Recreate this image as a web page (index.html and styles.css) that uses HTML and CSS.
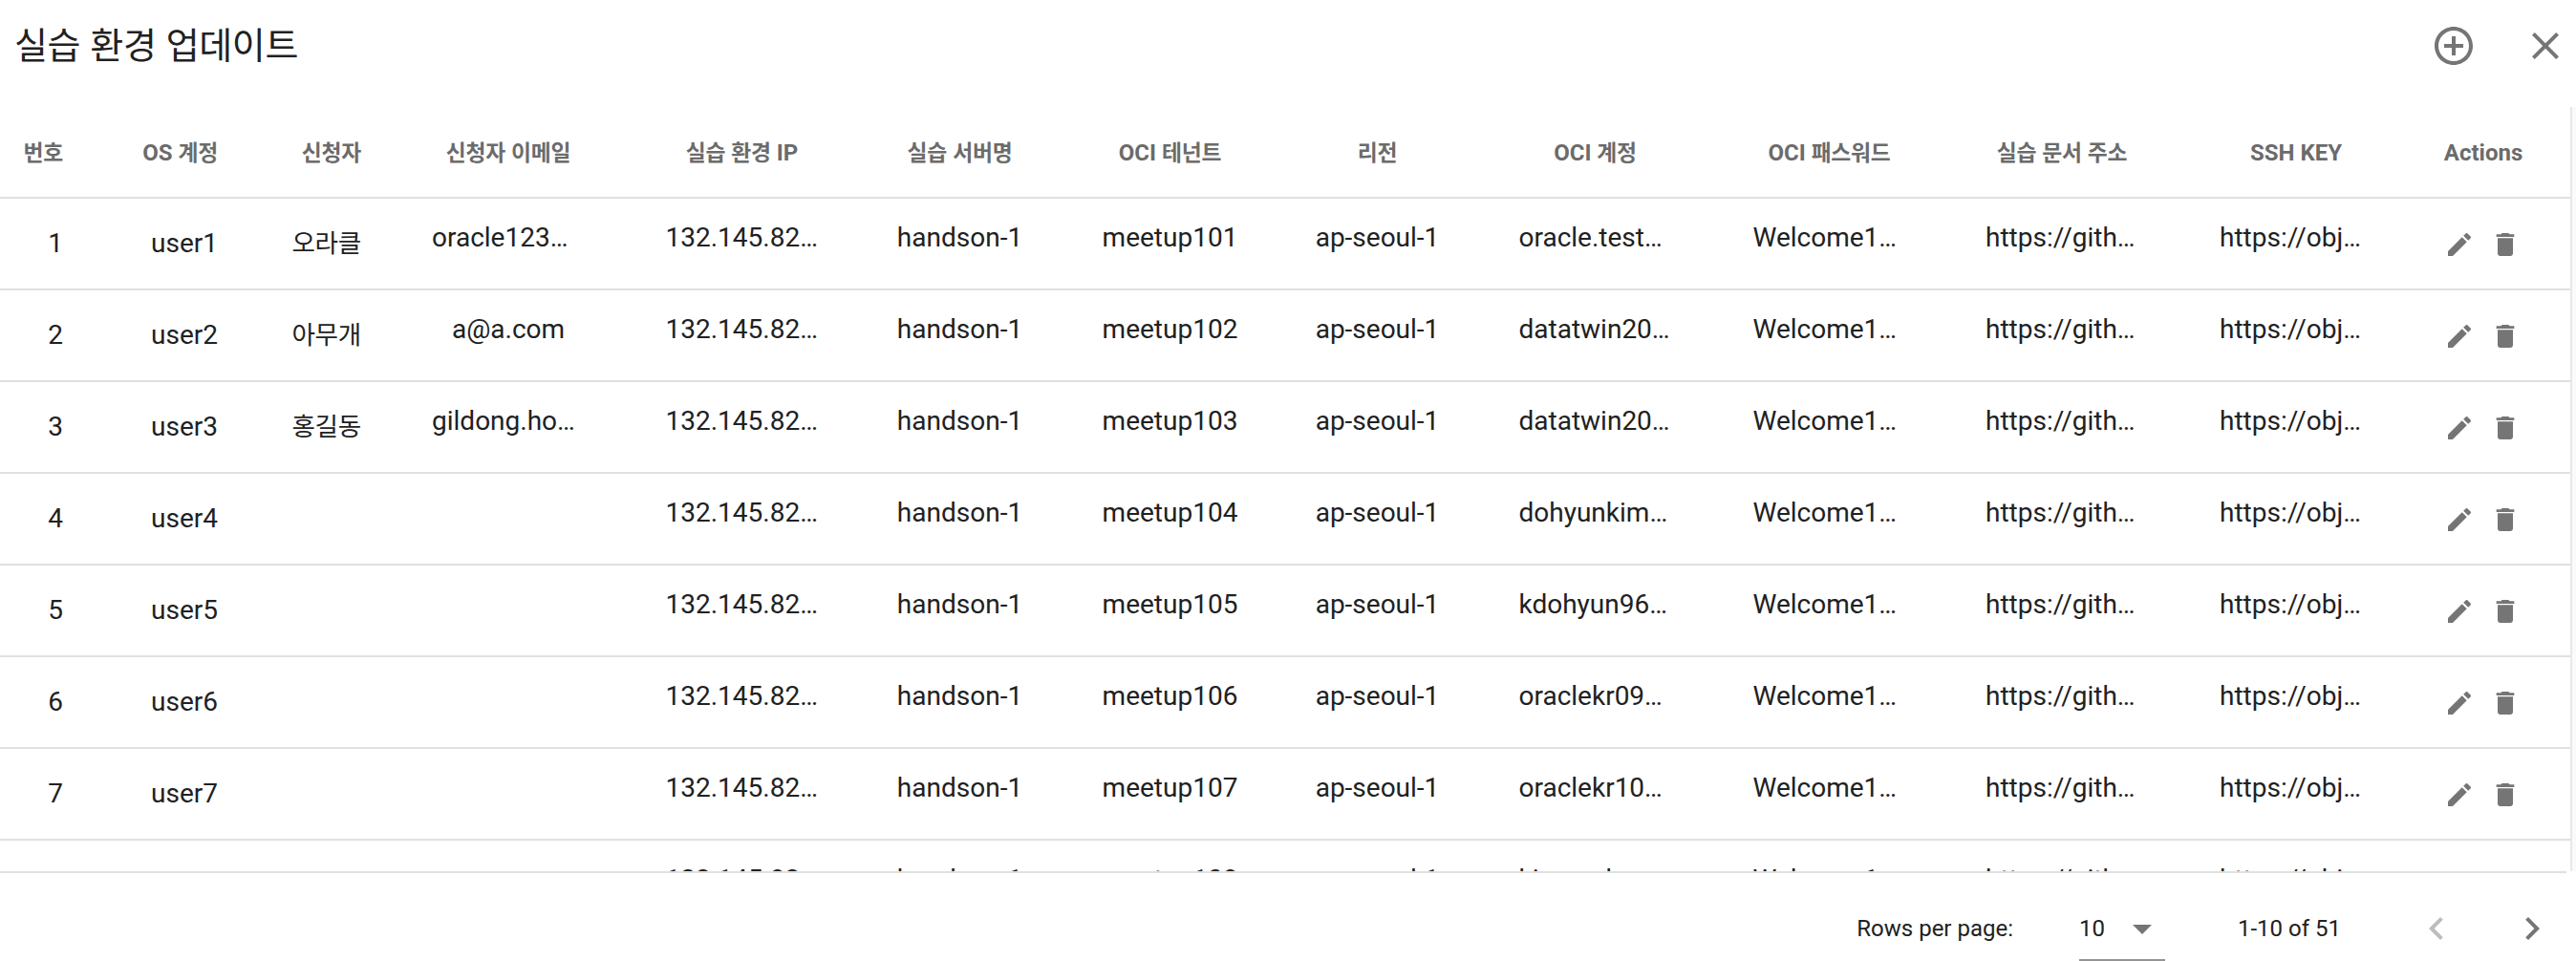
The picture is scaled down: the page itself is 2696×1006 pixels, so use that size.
FILE: index.html
```html
<!DOCTYPE html>
<html lang="ko">
<head>
<meta charset="utf-8">
<title>실습 환경 업데이트</title>
<link rel="stylesheet" href="styles.css">
</head>
<body>
<svg class="sprite" aria-hidden="true">
  <symbol id="edit" viewBox="0 0 24 24"><path d="M3 17.25V21h3.75L17.81 9.94l-3.75-3.75L3 17.25zM20.71 7.04c.39-.39.39-1.02 0-1.41l-2.34-2.34c-.39-.39-1.02-.39-1.41 0l-1.83 1.83 3.75 3.75 1.83-1.83z"/></symbol>
  <symbol id="delete" viewBox="0 0 24 24"><path d="M6 19c0 1.1.9 2 2 2h8c1.1 0 2-.9 2-2V7H6v12zM19 4h-3.500l-1-1h-5l-1 1H5v2h14V4z"/></symbol>
</svg>
<header class="toolbar">
  <h1 class="title"><span class="ko">실습 환경 업데이트</span></h1>
  <button class="icon-button" aria-label="추가"><svg class="icon-large" viewBox="0 0 24 24"><path d="M13 7h-2v4H7v2h4v4h2v-4h4v-2h-4V7zm-1-5C6.480 2 2 6.480 2 12s4.480 10 10 10 10-4.480 10-10S17.520 2 12 2zm0 18c-4.410 0-8-3.590-8-8s3.590-8 8-8 8 3.590 8 8-3.590 8-8 8z"/></svg></button>
  <button class="icon-button" aria-label="닫기"><svg class="icon-large" viewBox="0 0 24 24"><path d="M19 6.410L17.590 5 12 10.590 6.410 5 5 6.410 10.590 12 5 17.590 6.410 19 12 13.410 17.590 19 19 17.590 13.410 12z"/></svg></button>
</header>
<main class="scroller">
  <table class="grid">
    <colgroup>
      <col class="c-no"><col class="c-os"><col class="c-name"><col class="c-mail"><col class="c-ip"><col class="c-server"><col class="c-tenant"><col class="c-region"><col class="c-account"><col class="c-pass"><col class="c-doc"><col class="c-ssh"><col class="c-actions"><col>
    </colgroup>
    <thead>
      <tr>
        <th class="num"><span class="ko">번호</span></th>
        <th class="num">OS <span class="ko">계정</span></th>
        <th class="num"><span class="ko">신청자</span></th>
        <th><span class="ko">신청자 이메일</span></th>
        <th><span class="ko">실습 환경</span> IP</th>
        <th><span class="ko">실습 서버명</span></th>
        <th>OCI <span class="ko">테넌트</span></th>
        <th><span class="ko">리전</span></th>
        <th>OCI <span class="ko">계정</span></th>
        <th>OCI <span class="ko">패스워드</span></th>
        <th><span class="ko">실습 문서 주소</span></th>
        <th>SSH KEY</th>
        <th>Actions</th>
        <th></th>
      </tr>
    </thead>
    <tbody id="rows"></tbody>
  </table>
  <div class="track"></div>
</main>
<footer class="pager">
  <span class="label">Rows per page:</span>
  <div class="select"><span class="value">10</span><svg class="icon-large" viewBox="0 0 24 24"><path d="M7 10l5 5 5-5z"/></svg></div>
  <span class="range">1-10 of 51</span>
  <button class="icon-button prev" aria-label="이전" disabled><svg class="icon-large" viewBox="0 0 24 24"><path d="M15.410 7.410L14 6l-6 6 6 6 1.410-1.410L10.830 12z"/></svg></button>
  <button class="icon-button next" aria-label="다음"><svg class="icon-large" viewBox="0 0 24 24"><path d="M10 6L8.590 7.410 13.170 12l-4.580 4.590L10 18l6-6z"/></svg></button>
</footer>
<script src="rows.js"></script>
</body>
</html>
```
FILE: rows.js
```js
const users = [
  ['오라클', 'oracle123…', 'oracle.test…'],
  ['아무개', 'a@a.com', 'datatwin20…'],
  ['홍길동', 'gildong.ho…', 'datatwin20…'],
  ['', '', 'dohyunkim…'],
  ['', '', 'kdohyun96…'],
  ['', '', 'oraclekr09…'],
  ['', '', 'oraclekr10…'],
  ['', '', 'kimnaek…'],
];

// Shortened values start at the left of their box, whole ones are centred.
const box = (text) =>
  `<td><div class="box${text.endsWith('…') ? ' cut' : ''}">${text}</div></td>`;
const icon = (name) => `<svg class="icon"><use href="#${name}"/></svg>`;

document.getElementById('rows').innerHTML = users.map(([name, mail, account], i) => {
  const n = i + 1;
  return `<tr>
    <td class="num">${n}</td>
    <td class="num">user${n}</td>
    <td class="num"><span class="ko">${name}</span></td>
    ${[mail, '132.145.82…', 'handson-1', `meetup10${n}`, 'ap-seoul-1', account,
      'Welcome1…', 'https://gith…', 'https://obj…'].map(box).join('')}
    <td><div class="actions">${icon('edit')}${icon('delete')}</div></td>
    <td></td>
  </tr>`;
}).join('');
```
FILE: styles.css
```css
* { box-sizing: border-box; }

body {
  margin: 0;
  height: 1006px;
  overflow: hidden;
  display: flex;
  flex-direction: column;
  background: #fff;
  color: #212121;
  font-family: Roboto, "Noto Sans CJK KR", sans-serif;
}

.sprite { position: absolute; width: 0; height: 0; }

svg { display: block; fill: #757575; }
.icon-large { width: 48px; height: 48px; flex: none; }
.icon { width: 32px; height: 32px; }
.icon-button { border: 0; padding: 0; background: none; }

/* Hangul is set slightly smaller than the Latin text beside it */
.ko {
  font-size: 0.95em;
  letter-spacing: -0.01em;
  word-spacing: 0.03em;
}

.toolbar {
  height: 112px;
  flex: none;
  display: flex;
  align-items: flex-start;
  gap: 48px;
  padding: 24px 8px 0 15px;
}
.title {
  margin: 0 auto 0 0;
  font-size: 40px;
  font-weight: 400;
  line-height: 48px;
}

.scroller {
  height: 800px;
  flex: none;
  overflow: hidden;
  display: flex;
  align-items: flex-start;
}
.track {
  width: 6px;
  height: 800px;
  background: #fafafa;
  border-left: 2px solid #e8e8e8;
}

.grid {
  width: 2690px;
  table-layout: fixed;
  border-collapse: separate;
  border-spacing: 0;
}
.c-no { width: 66px; }
.c-os { width: 162px; }
.c-name { width: 150px; }
.c-mail { width: 308px; }
.c-ip { width: 181px; }
.c-server { width: 275px; }
.c-tenant { width: 165px; }
.c-region { width: 269px; }
.c-account { width: 187px; }
.c-pass { width: 303px; }
.c-doc { width: 184px; }
.c-ssh { width: 306px; }
.c-actions { width: 86px; }

th, td {
  height: 96px;
  padding: 0;
  border-bottom: 2px solid #e0e0e0;
  text-align: center;
  vertical-align: middle;
  white-space: nowrap;
}
th {
  padding-top: 2px;
  font-size: 24px;
  font-weight: 700;
  line-height: 36px;
  color: #6b6b6b;
}
td {
  font-size: 28px;
  line-height: 40px;
}
.num { text-align: right; }

.box {
  width: 160px;
  margin: 0 auto;
  padding-bottom: 13px;
}
.cut { text-align: left; }
.actions {
  display: flex;
  gap: 16px;
  padding: 2px 0 0 2px;
}

.pager {
  flex: 1;
  width: 2686px;
  border-top: 2px solid #e0e0e0;
  display: flex;
  align-items: flex-start;
  justify-content: flex-end;
  padding: 34px 12px 0 0;
  font-size: 24px;
  line-height: 48px;
}
.label { margin-right: 69px; }
.select {
  width: 90px;
  height: 58px;
  display: flex;
  justify-content: space-between;
  border-bottom: 2px solid #949494;
}
.range { margin-left: 76px; }
.prev { margin-left: 76px; }
.prev svg { fill: #bdbdbd; }
.next { margin-left: 52px; }
```
